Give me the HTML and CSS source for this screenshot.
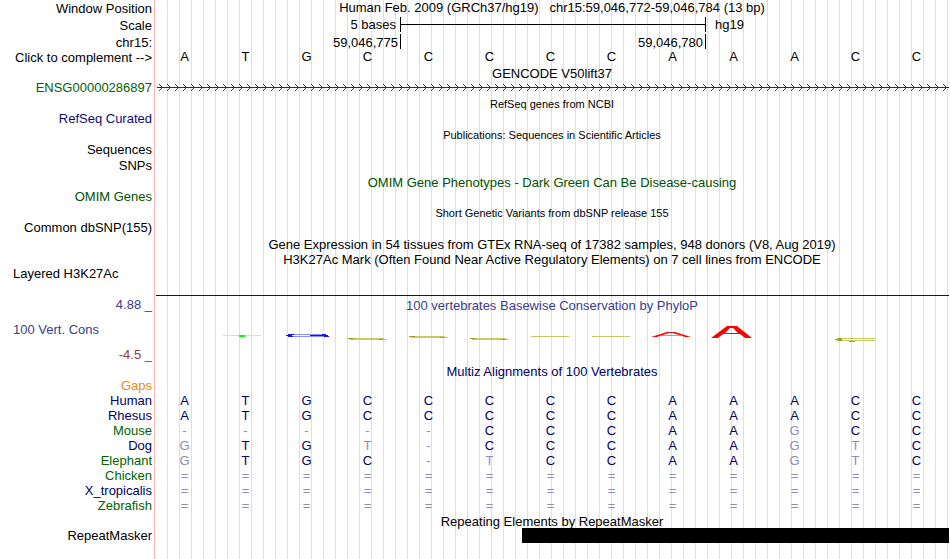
FILE: index.html
```html
<!DOCTYPE html>
<html lang="en">
<head>
<meta charset="utf-8">
<title>chr15:59,046,772-59,046,784</title>
<link rel="stylesheet" href="styles.css">
</head>
<body>
<main class="browser">
  <header>
    <div class="row tall">
      <div class="label low">Window Position</div>
      <h1 class="title">Human Feb. 2009 (GRCh37/hg19) &nbsp; chr15:59,046,772-59,046,784 (13 bp)</h1>
    </div>
    <div class="row tall">
      <div class="label low">Scale</div>
      <div class="bases shifted">
        <span class="scale-size">5 bases</span>
        <span class="scale-bar"></span>
        <span class="scale-db">hg19</span>
      </div>
    </div>
    <div class="row">
      <div class="label low">chr15:</div>
      <div class="bases shifted">
        <span class="tick tick-first">59,046,775</span>
        <span class="tick tick-second">59,046,780</span>
      </div>
    </div>
    <div class="row tall">
      <button class="label low" type="button">Click to complement --&gt;</button>
      <div class="bases letters"><span>A</span><span>T</span><span>G</span><span>C</span><span>C</span><span>C</span><span>C</span><span>C</span><span>A</span><span>A</span><span>A</span><span>C</span><span>C</span></div>
    </div>
  </header>

  <section class="track">
    <h2 class="title">GENCODE V50lift37</h2>
    <div class="row">
      <div class="label green">ENSG00000286897</div>
      <svg class="gene" aria-hidden="true">
        <defs>
          <pattern id="strand" width="8" height="15" patternUnits="userSpaceOnUse">
            <path d="M2 4h1v1h1v1h1v1h1v1h-1v1h-1v1h-1v1h-1v-1h1v-1h1v-1h1v-1h-1v-1h-1v-1h-1z" fill="#006400"/>
          </pattern>
        </defs>
        <rect width="100%" height="15" fill="url(#strand)"/>
        <rect y="7" width="100%" height="1" fill="#005000"/>
      </svg>
    </div>
  </section>

  <section class="track">
    <h2 class="title small">RefSeq genes from NCBI</h2>
    <div class="row"><div class="label navy">RefSeq Curated</div></div>
  </section>

  <section class="track">
    <h2 class="title small">Publications: Sequences in Scientific Articles</h2>
    <div class="row"><div class="label">Sequences</div></div>
    <div class="row"><div class="label">SNPs</div></div>
  </section>

  <section class="track">
    <h2 class="title omim">OMIM Gene Phenotypes - Dark Green Can Be Disease-causing</h2>
    <div class="row"><div class="label omim">OMIM Genes</div></div>
  </section>

  <section class="track">
    <h2 class="title small">Short Genetic Variants from dbSNP release 155</h2>
    <div class="row"><div class="label">Common dbSNP(155)</div></div>
  </section>

  <section class="track">
    <h2 class="title">Gene Expression in 54 tissues from GTEx RNA-seq of 17382 samples, 948 donors (V8, Aug 2019)</h2>
  </section>

  <section class="track histone">
    <h2 class="title">H3K27Ac Mark (Often Found Near Active Regulatory Elements) on 7 cell lines from ENCODE</h2>
    <div class="row"><div class="label start">Layered H3K27Ac</div></div>
  </section>

  <section class="conservation">
    <div class="axis">
      <div class="label high">4.88 _</div>
      <div class="label start high">100 Vert. Cons</div>
      <div class="label lowest">-4.5 _</div>
    </div>
    <div class="plot">
      <h2 class="high">100 vertebrates Basewise Conservation by PhyloP</h2>
      <svg class="logo" viewBox="155 320 794 26" preserveAspectRatio="none" aria-hidden="true">
        <path d="M223 335h38v1h-38z" fill="#b4f5b4"/>
        <path d="M239 335h6v2h-6z" fill="#00ff00"/>
        <path d="M289 334h36v1h-36zM291 336h37v1h-37z" fill="#8c8cff"/>
        <path d="M286 335h6v1h-6zM288 336h5v1h-5zM288 334h6v1h-6zM310 335h15v1h-15zM322 334h4v1h-4zM324 336h5v1h-5zM323 335h5v1h-5z" fill="#1414f0"/>
        <g fill="#c8c864">
          <path d="M348 338h36v1h-36zM350 339h37v1h-37z"/>
          <path d="M409 336h36v1h-36zM411 337h37v1h-37z"/>
          <path d="M470 338h36v1h-36zM472 339h37v1h-37z"/>
          <path d="M531 336h38v1h-38z"/>
          <path d="M592 336h38v1h-38z"/>
          <path d="M837 338h38v1h-38zM837 340h38v1h-38z"/>
        </g>
        <g fill="#a0a01e">
          <path d="M348 338h6v1h-6zM379 339h4v1h-4z"/>
          <path d="M409 336h6v1h-6zM440 337h4v1h-4z"/>
          <path d="M470 338h6v1h-6zM501 339h4v1h-4z"/>
          <path d="M835 339h7v1h-7zM838 338h4v1h-4zM838 340h4v1h-4z"/>
        </g>
        <path d="M849 341h6v1h-6z" fill="#00ff00"/>
        <path d="M651 337 667 332h8l16 5h-6l-4-1.500h-20l-4 1.500zm12-2h16l-6-2h-4z" fill="#ff0000" fill-rule="evenodd"/>
        <path d="M711 338 727 326h10l15 12h-7l-5-4h-17l-5 4zm14-5h13l-5-5h-3z" fill="#ff0000" fill-rule="evenodd"/>
      </svg>
    </div>
  </section>

  <section class="track">
    <h2 class="title multiz">Multiz Alignments of 100 Vertebrates</h2>
    <table class="alignment" aria-label="Multiz alignments">
      <colgroup><col class="species"><col span="13"></colgroup>
      <tbody>
        <tr class="gaps"><th scope="row">Gaps</th><td colspan="13"></td></tr>
        <tr><th scope="row">Human</th><td>A</td><td>T</td><td>G</td><td>C</td><td>C</td><td>C</td><td>C</td><td>C</td><td>A</td><td>A</td><td>A</td><td>C</td><td>C</td></tr>
        <tr><th scope="row">Rhesus</th><td>A</td><td>T</td><td>G</td><td>C</td><td>C</td><td>C</td><td>C</td><td>C</td><td>A</td><td>A</td><td>A</td><td>C</td><td>C</td></tr>
        <tr class="alt"><th scope="row">Mouse</th><td class="diff">-</td><td class="diff">-</td><td class="diff">-</td><td class="diff">-</td><td class="diff">-</td><td>C</td><td>C</td><td>C</td><td>A</td><td>A</td><td class="diff">G</td><td>C</td><td>C</td></tr>
        <tr><th scope="row">Dog</th><td class="diff">G</td><td>T</td><td>G</td><td class="diff">T</td><td class="diff">-</td><td>C</td><td>C</td><td>C</td><td>A</td><td>A</td><td class="diff">G</td><td class="diff">T</td><td>C</td></tr>
        <tr class="alt"><th scope="row">Elephant</th><td class="diff">G</td><td>T</td><td>G</td><td>C</td><td class="diff">-</td><td class="diff">T</td><td>C</td><td>C</td><td>A</td><td>A</td><td class="diff">G</td><td class="diff">T</td><td>C</td></tr>
        <tr class="alt unaligned"><th scope="row">Chicken</th><td>=</td><td>=</td><td>=</td><td>=</td><td>=</td><td>=</td><td>=</td><td>=</td><td>=</td><td>=</td><td>=</td><td>=</td><td>=</td></tr>
        <tr class="unaligned"><th scope="row">X_tropicalis</th><td>=</td><td>=</td><td>=</td><td>=</td><td>=</td><td>=</td><td>=</td><td>=</td><td>=</td><td>=</td><td>=</td><td>=</td><td>=</td></tr>
        <tr class="alt unaligned"><th scope="row">Zebrafish</th><td>=</td><td>=</td><td>=</td><td>=</td><td>=</td><td>=</td><td>=</td><td>=</td><td>=</td><td>=</td><td>=</td><td>=</td><td>=</td></tr>
      </tbody>
    </table>
  </section>

  <section class="track">
    <h2 class="title">Repeating Elements by RepeatMasker</h2>
    <div class="row">
      <div class="label">RepeatMasker</div>
      <div class="bases shifted"><span class="repeat"></span></div>
    </div>
  </section>
</main>
</body>
</html>
```
FILE: styles.css
```css
* {
  box-sizing: border-box;
}

body {
  margin: 0;
  background: #fff;
  color: #000;
  font: 13px/15px "Liberation Sans", Arial, sans-serif;
}

/* Pink divider after the labels, guide lines every 12px behind the tracks */
.browser {
  min-height: 100vh;
  padding-right: 1px;
  background:
    linear-gradient(#ffb4b4, #ffb4b4) 154px 0 / 1px 100% no-repeat,
    linear-gradient(#fff, #fff) 0 0 / 156px 100% no-repeat,
    linear-gradient(90deg, #dcdcf8 1px, transparent 1px) 167px 0 / 12px 100%;
}

h1,
h2 {
  margin: 0;
  font-size: 13px;
  font-weight: normal;
  line-height: 15px;
  text-align: center;
  white-space: nowrap;
}

.row {
  display: grid;
  grid-template-columns: 155px minmax(0, 1fr);
  min-height: 16px;
}

header .row {
  height: 15px;
  min-height: 0;
}

header .row.tall {
  height: 17px;
}

.track {
  padding-bottom: 1px;
}

.track > .title {
  height: 14px;
  margin-left: 155px;
}

.title.small {
  font-size: 11px;
}

.label {
  align-self: start;
  padding: 0 3px 0 0;
  border: 0;
  background: none;
  color: inherit;
  font: inherit;
  text-align: right;
  white-space: nowrap;
}

.label.low {
  padding-top: 1px;
}

.axis .label {
  align-self: stretch;
}

.label.start {
  padding-left: 13px;
  text-align: left;
}

.green {
  color: #006400;
}

.navy {
  color: #0c0c78;
}

.omim {
  color: #005000;
}

.high {
  color: #3c3c8c;
}

.lowest {
  color: #8c3c3c;
}

.multiz {
  color: #000064;
}

/* One column for each of the thirteen bases */
.bases {
  display: grid;
  grid-template-columns: repeat(13, minmax(0, 1fr));
}

.letters {
  margin: 0 2px 0 -1px;
  text-align: center;
}

.shifted {
  margin-left: 1px;
}

.scale-size {
  grid-column: 1 / 5;
  padding-right: 4px;
  text-align: right;
}

.scale-bar {
  grid-column: 5 / 10;
  height: 15px;
  margin-right: -1px;
  border: solid #000;
  border-width: 0 1px;
  background: linear-gradient(#000, #000) 0 7px / 100% 1px no-repeat;
}

.scale-db {
  grid-column: 10 / 13;
  padding-left: 10px;
}

.tick {
  height: 15px;
  margin-right: -1px;
  padding: 1px 2px 0 0;
  border-right: 1px solid #000;
  text-align: right;
}

.tick-first {
  grid-column: 1 / 5;
}

.tick-second {
  grid-column: 5 / 10;
}

.gene {
  width: calc(100% - 2px);
  height: 15px;
  margin-left: 2px;
}

.histone {
  min-height: 43px;
}

.conservation {
  display: grid;
  grid-template-columns: 155px minmax(0, 1fr);
  min-height: 69px;
  background: linear-gradient(#0c0c78, #0c0c78) 156px 0 / 100% 1px no-repeat;
}

.axis {
  display: flex;
  flex-direction: column;
  justify-content: space-between;
  padding: 2px 0;
}

.plot {
  padding-top: 3px;
}

.logo {
  display: block;
  width: 100%;
  height: 26px;
  margin-top: 7px;
}

.alignment {
  width: calc(100% - 2px);
  table-layout: fixed;
  border-collapse: collapse;
  color: #000064;
}

.species {
  width: 154px;
}

.alignment th,
.alignment td {
  height: 15px;
  padding: 0;
  font-weight: normal;
  text-align: center;
}

.alignment th {
  padding-right: 2px;
  text-align: right;
}

.alignment .gaps th {
  color: #e68c14;
}

.alignment .alt th {
  color: #006400;
}

.alignment .diff,
.alignment .unaligned td {
  color: #8c8cbe;
}

.repeat {
  grid-column: 7 / -1;
  height: 15px;
  background: #000;
}
```
